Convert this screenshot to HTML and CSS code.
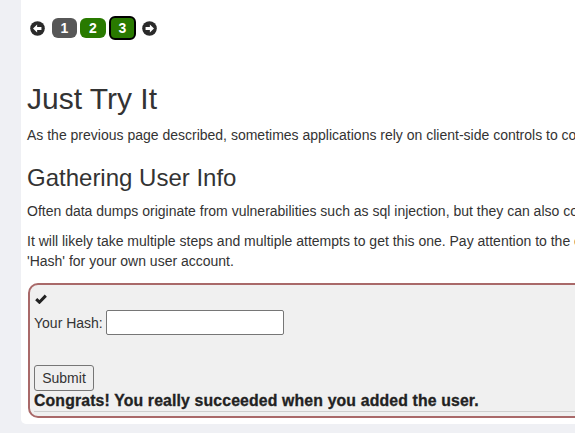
FILE: index.html
```html
<!DOCTYPE html>
<html>
<head>
<meta charset="utf-8">
<link rel="stylesheet" href="styles.css">
</head>
<body>
<div class="page">
  <div class="pager">
    <svg class="arrow prev" viewBox="0 0 16 16"><circle cx="8" cy="8" r="7.8" fill="#2a2a2a"/><path d="M3.2 8 L7.6 3.8 L7.6 6.4 L12.2 6.4 L12.2 9.6 L7.6 9.6 L7.6 12.2 Z" fill="#fff"/></svg>
    <span class="badge done">1</span>
    <span class="badge green">2</span>
    <span class="badge green active">3</span>
    <svg class="arrow next" viewBox="0 0 16 16"><circle cx="8" cy="8" r="7.8" fill="#2a2a2a"/><path d="M12.8 8 L8.4 3.8 L8.4 6.4 L3.8 6.4 L3.8 9.6 L8.4 9.6 L8.4 12.2 Z" fill="#fff"/></svg>
  </div>

  <h1>Just Try It</h1>
  <p class="line">As the previous page described, sometimes applications rely on client-side controls to control access (obscurity). If you can find invisible items, note them and move on.</p>

  <h2>Gathering User Info</h2>
  <p class="line">Often data dumps originate from vulnerabilities such as sql injection, but they can also come from poor or lacking access control.</p>
  <p>It will likely take multiple steps and multiple attempts to get this one. Pay attention to the comments and leaked info. Use the user list you pulled to provide the<br>'Hash' for your own user account.</p>

  <div class="attack">
    <div class="check">
      <svg viewBox="0 0 12 10" width="12" height="10"><path d="M1.2 5.2 L4.4 8.2 L10.8 1.6" fill="none" stroke="#222" stroke-width="3"/></svg>
    </div>
    <form class="row">
      <label for="hash">Your Hash:</label>
      <input id="hash" type="text" class="field">
    </form>
    <button class="submit" type="button">Submit</button>
    <div class="feedback">Congrats! You really succeeded when you added the user.</div>
  </div>
</div>
</body>
</html>
```
FILE: styles.css
```css
html, body {
  margin: 0;
  padding: 0;
  overflow: hidden;
  height: 100%;
  background: #eff0f4;
}
body {
  font-family: "Liberation Sans", Arial, sans-serif;
  font-size: 14px;
  line-height: 20px;
  color: #333;
}
.page {
  margin-left: 21px;
  width: 1500px;
  background: #fff;
  padding: 16px 0 6px 6px;
  border-bottom-left-radius: 5px;
}
.pager {
  display: flex;
  align-items: center;
  height: 24px;
  margin: 0 0 42px 3px;
}
.arrow {
  width: 15px;
  height: 15px;
}
.prev { margin-right: 7px; }
.badge {
  box-sizing: border-box;
  width: 25px;
  height: 20px;
  border-radius: 6px;
  color: #fff;
  font-weight: bold;
  font-size: 14px;
  display: flex;
  align-items: center;
  justify-content: center;
  margin-right: 3px;
}
.done { background: #575757; }
.green { background: #297a00; width: 26px; }
.active {
  width: 27px;
  height: 24px;
  border: 2px solid #000;
  margin-right: 6px;
}
h1 {
  font-size: 30px;
  font-weight: normal;
  line-height: 33px;
  margin: 20px 0 10px;
}
h2 {
  font-size: 24px;
  font-weight: normal;
  line-height: 26.4px;
  margin: 20px 0 10px;
}
p {
  margin: 0 0 10px;
}
.line { white-space: nowrap; }
.attack {
  width: 1000px;
  margin: 12px 0 0 1px;
  border: 2px solid #a96969;
  border-radius: 10px;
  background: #f0f0f0;
  padding: 0 4px 4px;
}
.check {
  height: 15px;
  padding: 9px 0 0 1px;
}
.check svg { display: block; }
.row {
  display: flex;
  align-items: center;
  margin: 0;
  padding-top: 1px;
}
.field {
  box-sizing: border-box;
  width: 178px;
  height: 25px;
  margin: 0 0 0 3px;
  border: 1px solid #767676;
  border-radius: 2px;
  background: #fff;
  font: 14px "Liberation Sans", Arial, sans-serif;
}
.submit {
  display: block;
  box-sizing: border-box;
  height: 26px;
  width: 60px;
  margin-top: 30px;
  padding: 0;
  border: 1px solid #767676;
  border-radius: 3px;
  background: #efefef;
  color: #333;
  font: 14px "Liberation Sans", Arial, sans-serif;
}
.feedback {
  font-weight: bold;
  font-size: 15.8px;
  line-height: 18px;
  letter-spacing: 0.15px;
  color: #222;
  padding-top: 1px;
  padding-bottom: 1px;
  border-bottom: 1px solid #cfcfcf;
  -webkit-text-stroke: 0.3px #222;
}
```
